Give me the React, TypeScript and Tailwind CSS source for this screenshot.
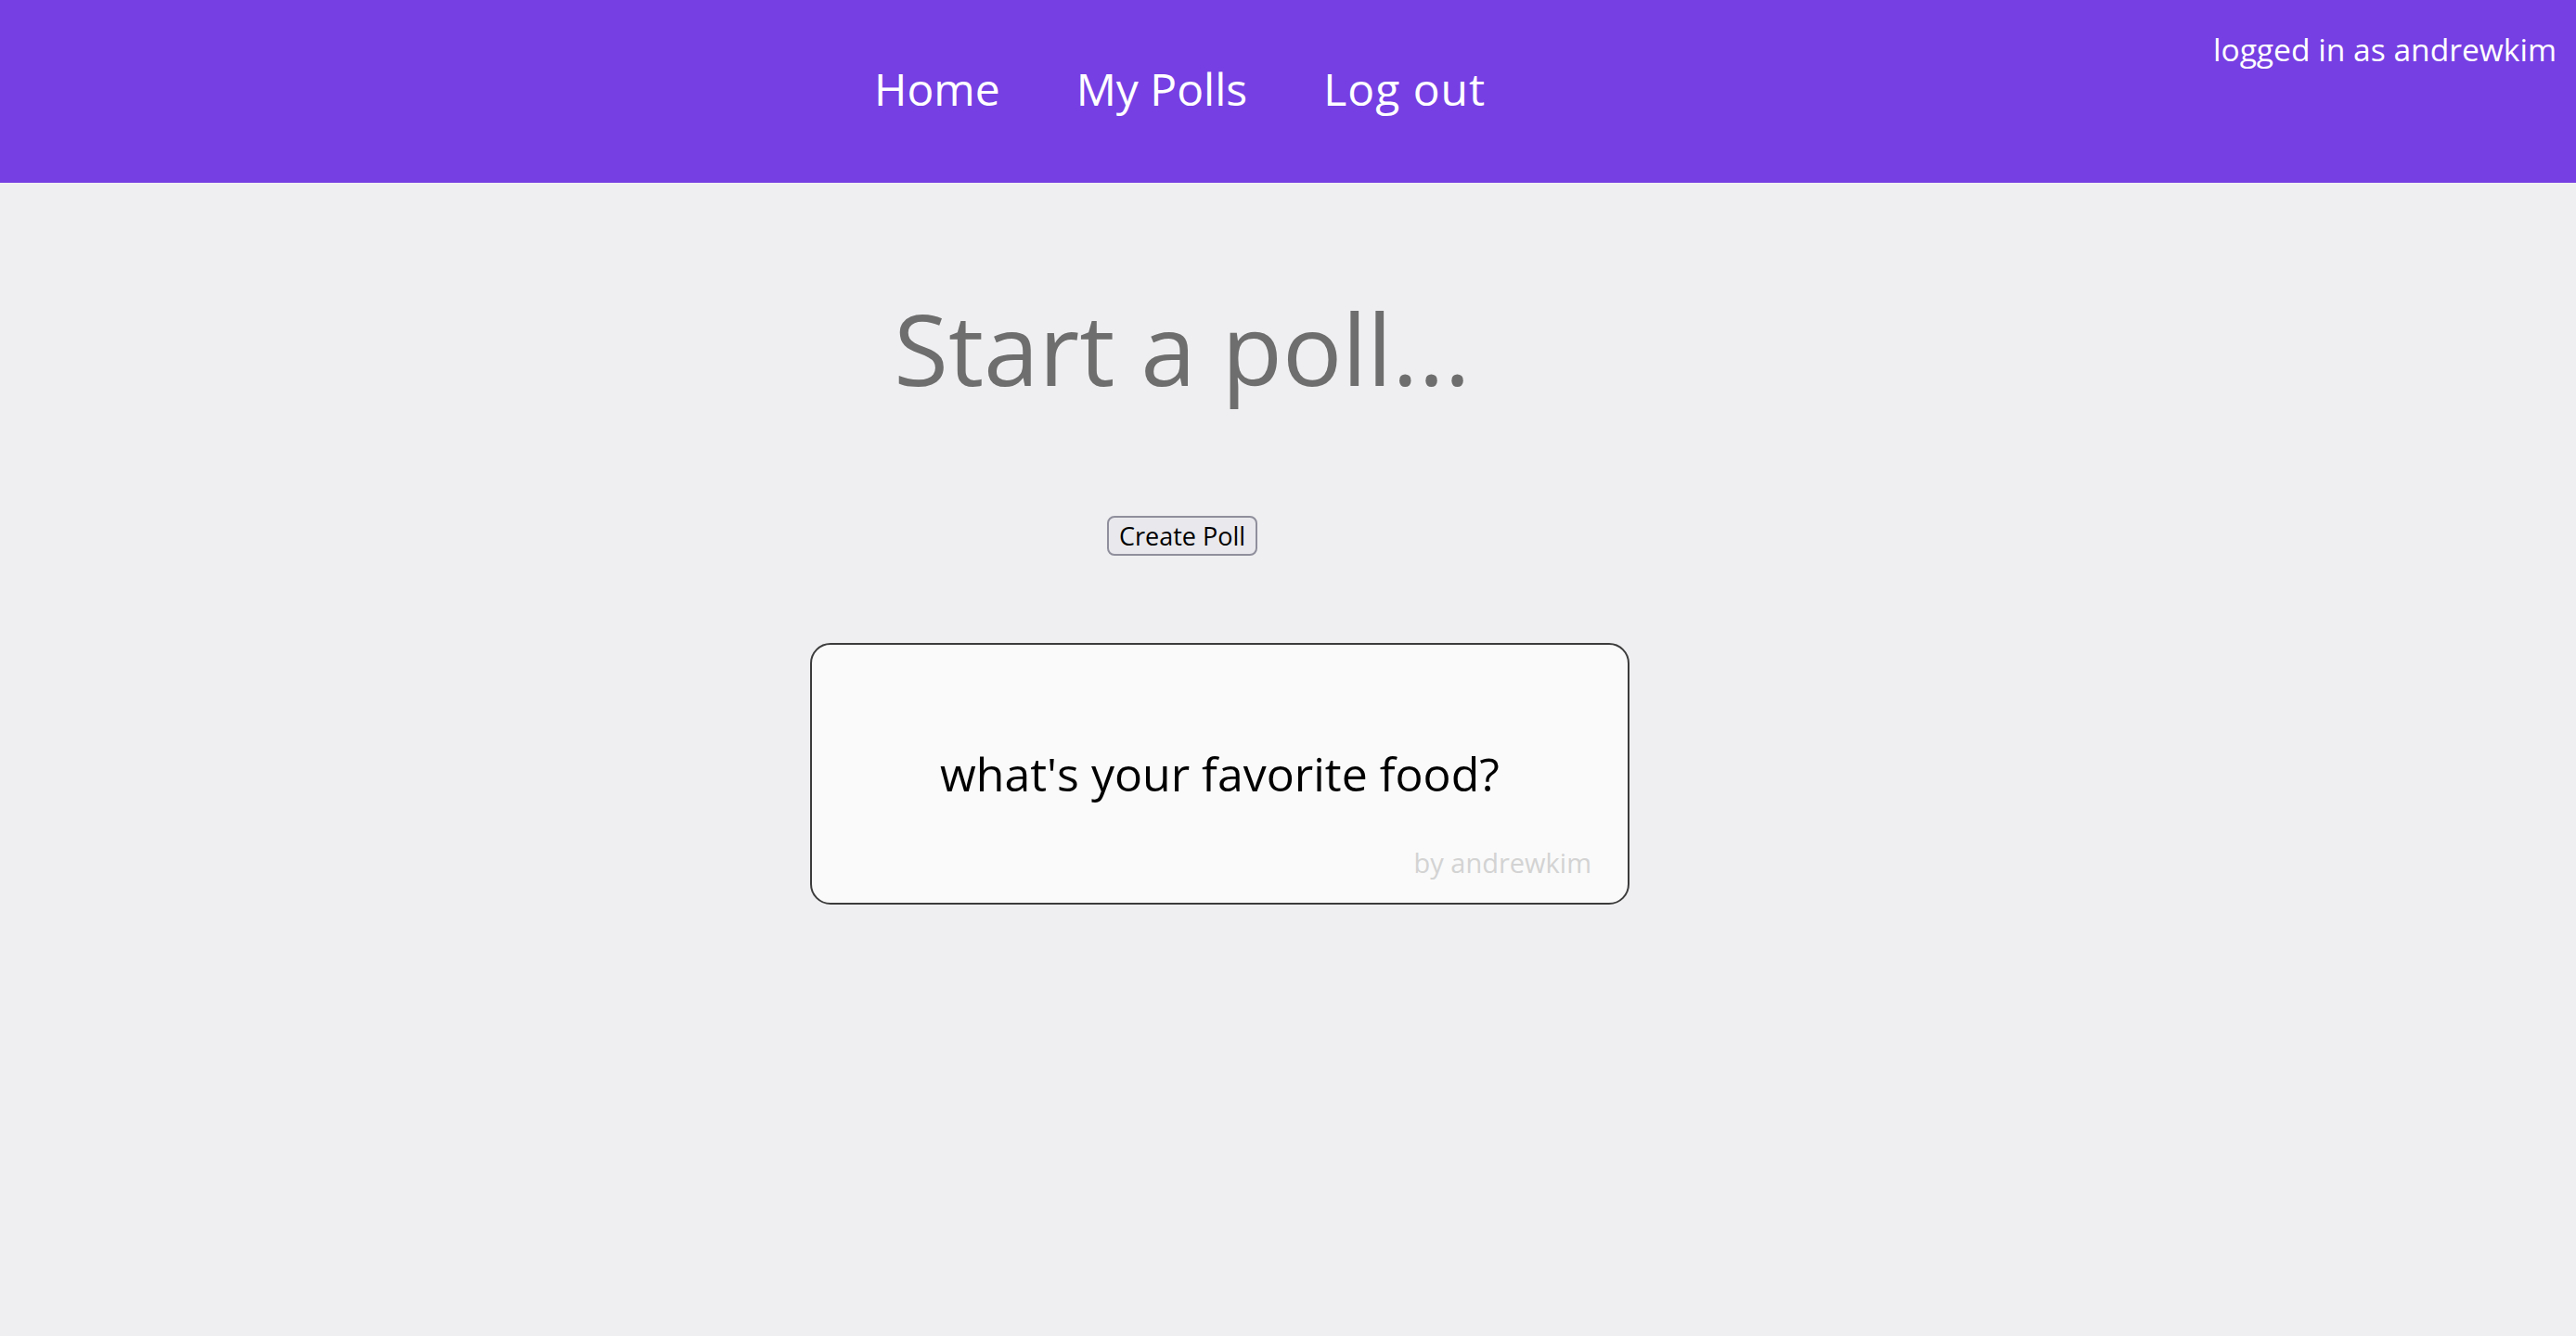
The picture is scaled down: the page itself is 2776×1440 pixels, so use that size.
import React from "react";

export default function App() {
  const font = { fontFamily: '"Open Sans", "Noto Sans", "DejaVu Sans", sans-serif' };
  return (
    <div className="min-h-[1440px] w-full bg-[#efeff1]" style={font}>
      <header className="flex h-[197px] items-start bg-[#763fe3] text-white">
        <nav className="ml-[942px] mt-[72px] flex gap-[82px] text-[48px] leading-[48px]">
          <a className="cursor-pointer">Home</a>
          <a className="cursor-pointer">My Polls</a>
          <a className="cursor-pointer tracking-[1px]">Log out</a>
        </nav>
        <div className="ml-auto mr-[21px] mt-[37px] text-[33.6px] leading-[33px]">
          logged in as andrewkim
        </div>
      </header>

      <main className="ml-[875px] flex w-[798px] flex-col items-center">
        <h1 className="mt-[124px] text-[107px] leading-[107px] text-[#6e6e6e]">
          Start a poll...
        </h1>
        <button className="mt-[128px] flex h-[43px] items-center justify-center rounded-[8px] border-2 border-[#8f8f9d] bg-[#e9e9ed] px-[11px] text-[27px] leading-[27px] text-black">
          Create Poll
        </button>
        <div className="-ml-[2px] mt-[94px] flex h-[282px] w-[883px] flex-col self-start rounded-[22px] border-2 border-[#3c3c3c] bg-[#fafafa] pt-[114px]">
          <div className="text-center text-[50px] leading-[50px] text-black">
            what's your favorite food?
          </div>
          <div className="mt-[56px] pr-[39px] text-right text-[29px] leading-[29px] text-[#d3d3d3]">
            by andrewkim
          </div>
        </div>
      </main>
    </div>
  );
}
